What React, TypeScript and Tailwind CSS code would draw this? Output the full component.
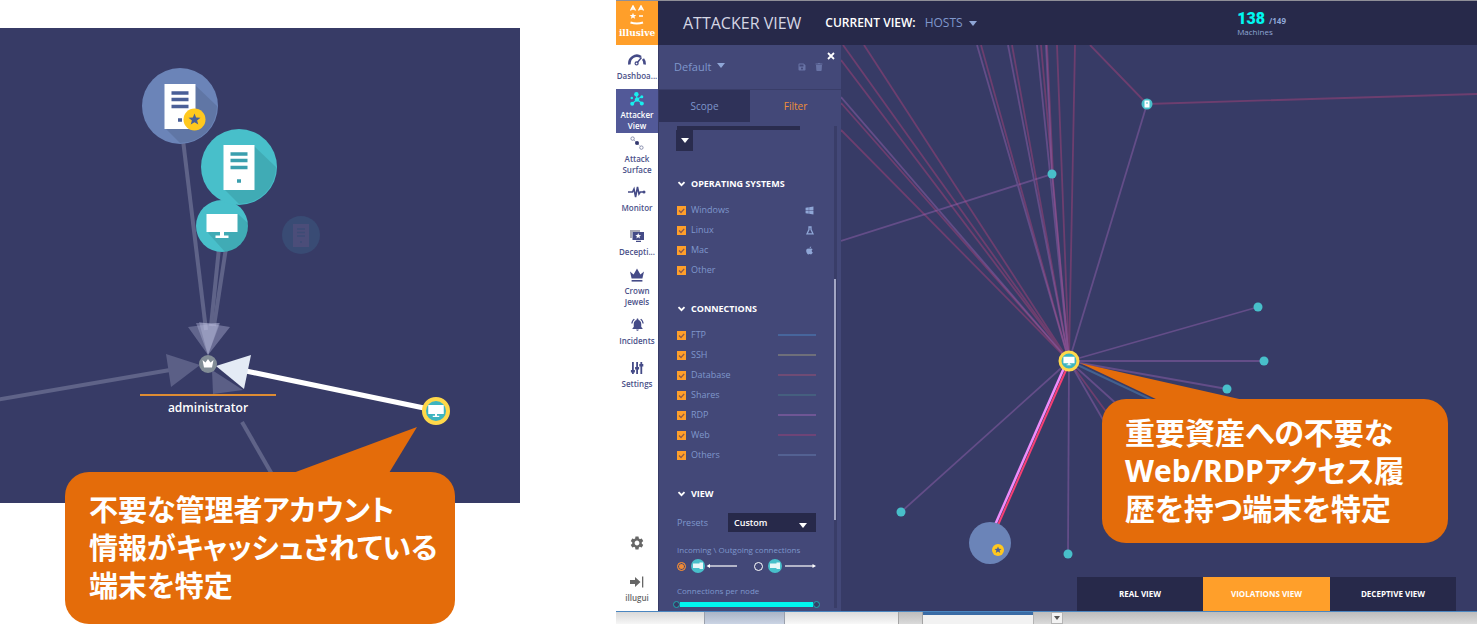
import React from "react";
import clsx from "clsx";
import { FaApple, FaSave, FaTrash, FaWindows } from "react-icons/fa";
import { MdNotificationsActive, MdSettings } from "react-icons/md";

const STAR =
  "M0 -6 L1.6 -2 L6 -1.8 L2.6 0.9 L3.8 5.1 L0 2.7 L-3.8 5.1 L-2.6 0.9 L-6 -1.8 L-1.6 -2 Z";

const HUB = [1069, 361];

// x, y of the far end of every edge that meets the hub
const redEdges = [
  [841, 60],
  [843, 45],
  [864, 45],
  [841, 103],
  [841, 130],
  [981, 45],
  [1012, 45],
  [1041, 45],
  [1057, 45],
  [1075, 45],
  [1110, 417],
];
const purpleEdges = [
  [841, 97],
  [977, 45],
  [1008, 45],
  [1037, 45],
  [1052, 174],
  [1147, 104],
  [1258, 307],
  [1264, 361],
  [1227, 389],
  [1120, 407],
  [1106, 425],
  [901, 512],
  [1068, 554],
];
const dots = [
  [1052, 174],
  [1258, 307],
  [1264, 361],
  [1227, 389],
  [901, 512],
  [1068, 554],
];

function DashboardIcon() {
  return (
    <svg viewBox="0 0 18 14" className="h-[14px] w-[18px]" fill="none" stroke="#454b87">
      <path d="M1.500 11.500 A7.500 7.500 0 0 1 13 4" strokeWidth="2.600" />
      <path d="M15 6 A7.500 7.500 0 0 1 16.500 11.500" strokeWidth="2.600" />
      <path d="M13.500 4.500 L9 10" strokeWidth="1.400" />
      <circle cx="8.600" cy="10.400" r="1.500" strokeWidth="1.200" />
    </svg>
  );
}

function AttackerIcon() {
  return (
    <svg viewBox="0 0 14 14" className="size-[14px]" fill="#18f0ee" stroke="#18f0ee">
      <path d="M7 7 L6.400 2.500 M7 7.500 L2.500 11.500 M7 7.500 L11.500 11 M7 7 L11.500 5" strokeWidth="1.200" />
      <circle cx="6.400" cy="2.300" r="2.200" stroke="none" />
      <circle cx="7" cy="7.600" r="2.200" stroke="none" />
      <circle cx="2.200" cy="11.800" r="2" stroke="none" />
      <circle cx="11.800" cy="11.400" r="2" stroke="none" />
      <circle cx="11.800" cy="4.800" r="1.500" stroke="none" />
      <circle cx="1.800" cy="6" r="1.300" stroke="none" />
    </svg>
  );
}

function SurfaceIcon() {
  return (
    <svg viewBox="0 0 14 14" className="size-[14px]" fill="none" stroke="#8a8fae">
      <circle cx="2.600" cy="2.600" r="1.700" />
      <circle cx="11.400" cy="11.600" r="1.700" />
      <path d="M4 4 L10.200 10.200" strokeDasharray="1 1" />
      <circle cx="7" cy="7" r="2" fill="#33386f" stroke="none" />
    </svg>
  );
}

function MonitorIcon() {
  return (
    <svg viewBox="0 0 18 14" className="h-[14px] w-[18px]" fill="none" stroke="#454b87">
      <path d="M0 7 H4.500 L6 4 L7.600 12 L9.500 2 L11 9 L12.300 7 H16" strokeWidth="1.600" />
      <circle cx="16" cy="7" r="1.500" fill="#454b87" stroke="none" />
    </svg>
  );
}

function DeceptionIcon() {
  return (
    <svg viewBox="0 0 16 14" className="h-[14px] w-4">
      <path d="M1 1 H11 V3 H3 V9 H1 Z" fill="#a9a9b5" />
      <path d="M3.500 3 H15 V11 H3.500 Z M7 11.800 H12 V13 H7 Z" fill="#454b87" />
      <path d={STAR} transform="translate(9.200 7) scale(.48)" fill="#fff" />
    </svg>
  );
}

function CrownIcon() {
  return (
    <svg viewBox="0 0 16 14" className="h-[14px] w-4" fill="#454b87">
      <path d="M1 3.500 L4.600 6.500 L8 0.500 L11.400 6.500 L15 3.500 L13.400 10.500 H2.600 Z" />
      <path d="M2.600 12 H13.400 V13.600 H2.600 Z" />
    </svg>
  );
}

function SettingsIcon() {
  return (
    <svg viewBox="0 0 14 14" className="size-[14px]" fill="#454b87">
      <path d="M2 1 H3.800 V13 H2 Z M6.200 1 H8 V13 H6.200 Z M10.400 1 H12.200 V13 H10.400 Z" />
      <path d="M.9 9 H4.900 V11.500 H.9 Z M5.100 6 H9.100 V8.500 H5.100 Z M9.300 3 H13.300 V5.500 H9.300 Z" />
    </svg>
  );
}

function LinuxIcon() {
  return (
    <svg viewBox="0 0 8 9" className="h-[9px] w-2" fill="none" stroke="#8fa6d6">
      <path d="M3 1 H5 V3.600 L7 7.800 H1 L3 3.600 Z" strokeWidth="1.300" />
    </svg>
  );
}

const navItems = [
  { label: "Dashboa...", icon: <DashboardIcon /> },
  { label: "Attacker View", icon: <AttackerIcon />, active: true },
  { label: "Attack Surface", icon: <SurfaceIcon /> },
  { label: "Monitor", icon: <MonitorIcon /> },
  { label: "Decepti...", icon: <DeceptionIcon /> },
  { label: "Crown Jewels", icon: <CrownIcon /> },
  { label: "Incidents", icon: <MdNotificationsActive className="size-[15px] text-[#454b87]" /> },
  { label: "Settings", icon: <SettingsIcon /> },
];

const systems = [
  { label: "Windows", icon: <FaWindows className="size-[9px]" /> },
  { label: "Linux", icon: <LinuxIcon /> },
  { label: "Mac", icon: <FaApple className="size-[9px]" /> },
  { label: "Other", icon: null },
];

const connections = [
  { label: "FTP", color: "bg-[#47659c]" },
  { label: "SSH", color: "bg-[#6e6f7a]" },
  { label: "Database", color: "bg-[#6f4b75]" },
  { label: "Shares", color: "bg-[#455f7f]" },
  { label: "RDP", color: "bg-[#6f5695]" },
  { label: "Web", color: "bg-[#6e4477]" },
  { label: "Others", color: "bg-[#536192]" },
];

function Server({ x, y }: { x: number; y: number }) {
  return (
    <g transform={`translate(${x} ${y})`}>
      <path d="M-15 22 L0 37 A37 37 0 0 0 37 0 L15 -21 Z" fill="#000" opacity=".1" />
      <rect x="-15.500" y="-22" width="31" height="45" fill="#fff" />
      <path
        d="M-8.500 -13 H8.500 M-8.500 -6.500 H8.500 M-8.500 .5 H8.500 M-2 14 H2"
        stroke="currentColor"
        strokeWidth="3.500"
      />
    </g>
  );
}

function Screen({ x, y, scale }: { x: number; y: number; scale: number }) {
  return (
    <path
      d="M-15.500 -12 H15.500 V6 H2 V9.500 H6.500 V12 H-6.500 V9.500 H-2 V6 H-15.500 Z"
      transform={`translate(${x} ${y}) scale(${scale})`}
      fill="#fff"
    />
  );
}

function AccountGraph() {
  return (
    <svg className="block h-full w-full" role="img" aria-label="administrator account graph">
      <g transform="translate(0 -28)">
        <g stroke="#5f6388" strokeWidth="4" fill="none">
          <path d="M183 140 L206 330" />
          <path d="M219 248 L211 326" />
          <path d="M226 248 L214 326" />
          <path d="M-4 400 L170 370" />
          <path d="M242 422 L273 476" />
        </g>
        <g fill="#c3c6e6" opacity=".9">
          <path d="M188 327 L219 323 L208 355 Z" opacity=".35" />
          <path d="M196 323 L220 323 L208 355 Z" opacity=".4" />
          <path d="M199 322 L230 327 L208 355 Z" opacity=".4" />
        </g>
        <path d="M166 354 L171 387 L200 365 Z" fill="#5b5f86" />
        <path d="M212 370 L213 394 L243 390 Z" fill="#5b5f86" />
        <path d="M246 371 L424 408" stroke="#fff" strokeWidth="5" />
        <path d="M216 366 L251 355 L244 389 Z" fill="#e4ebf5" />
        <circle cx="208" cy="364" r="9" fill="#828d96" />
        <path d="M202.500 360 L205.500 362.500 L208 359 L210.500 362.500 L213.500 360 L212 367.500 H204 Z" fill="#fff" />

        <circle cx="180" cy="106" r="38" fill="#6b84b8" />
        <g color="#4a5f98">
          <Server x={180} y={106} />
        </g>
        <circle cx="194.500" cy="119.500" r="11" fill="#ffc81e" />
        <path d={STAR} transform="translate(194.500 119.500)" fill="#4a5f98" />

        <circle cx="222" cy="226" r="26" fill="#48bfca" />
        <circle cx="239" cy="167" r="38" fill="#48bfca" />
        <g color="#3a9fae">
          <Server x={239} y={167} />
        </g>
        <path d="M208 233 L225 252 A26 26 0 0 0 248 223 L238 214 Z" fill="#000" opacity=".1" />
        <Screen x={222} y={226} scale={1} />

        <circle cx="301" cy="235" r="19" fill="#394b74" />
        <rect x="293" y="224" width="16" height="23" fill="#4b4d79" />
        <path d="M297 229 H305 M297 232.500 H305 M297 236 H305 M300 242 H302" stroke="#3d4b75" strokeWidth="1.500" />

        <path d="M140 395 H276" stroke="#dd8c33" strokeWidth="2" />
        <text x="208" y="412" textAnchor="middle" className="fill-white text-[12px] font-semibold">
          administrator
        </text>

        <circle cx="436" cy="411" r="12" fill="#3db4c0" stroke="#ffd84a" strokeWidth="4" />
        <Screen x={436} y={411} scale={0.5} />
        <path d="M293 473 L417 427 L389 473 Z" fill="#e46c0a" />
      </g>
    </svg>
  );
}

function HostGraph() {
  return (
    <svg className="absolute inset-0 h-full w-full" role="img" aria-label="Host connections">
      <g transform="translate(-841 -45)">
        <g stroke="#b0427a" strokeWidth="1.800" opacity=".45">
          {redEdges.map(([x, y]) => (
            <line key={`${x}-${y}`} x1={x} y1={y} x2={HUB[0]} y2={HUB[1]} />
          ))}
          <path d="M1047 45 L1053 174 M1090 45 L1147 104 L1477 94" fill="none" />
        </g>
        <g stroke="#a066b8" strokeWidth="1.800" opacity=".42">
          {purpleEdges.map(([x, y]) => (
            <line key={`${x}-${y}`} x1={x} y1={y} x2={HUB[0]} y2={HUB[1]} />
          ))}
          <path d="M1046 45 L1052 174 L841 241" fill="none" />
        </g>
        <path d="M1069 361 L1152 400" stroke="#43618f" strokeWidth="2" />
        <path d="M1067 361 L995 525" stroke="#ef8cfb" strokeWidth="2.500" />
        <path d="M1070 361 L998 525" stroke="#f73f74" strokeWidth="2" />

        {dots.map(([x, y]) => (
          <circle key={`${x}-${y}`} cx={x} cy={y} r="4.500" fill="#48bfca" />
        ))}
        <circle cx="1147" cy="104" r="5.500" fill="#48bfca" />
        <path d="M1144.500 100.500 H1149.500 V107.500 H1144.500 Z" fill="#fff" />
        <path d="M1146 103 H1148" stroke="#48bfca" />

        <circle cx="990" cy="543" r="21" fill="#6b84b8" />
        <circle cx="998" cy="550" r="6" fill="#ffc81e" />
        <path d={STAR} transform="translate(998 550) scale(.6)" fill="#4a5f98" />

        <circle cx="1069" cy="361" r="9" fill="#3db4c0" stroke="#ffd84a" strokeWidth="3" />
        <Screen x={1069} y={361} scale={0.36} />
        <path d="M1080 363 L1160 401 L1248 401 Z" fill="#e46c0a" />
      </g>
    </svg>
  );
}

function CheckRow({ label, children }: { label: string; children?: React.ReactNode }) {
  return (
    <li className="flex h-5 items-center justify-between">
      <label className="flex items-center gap-[5px]">
        <span className="grid size-[9px]">
          <input
            type="checkbox"
            defaultChecked
            className="col-start-1 row-start-1 size-[9px] appearance-none bg-[#ff9f2a]"
          />
          <svg viewBox="0 0 9 9" className="pointer-events-none col-start-1 row-start-1 size-[9px]">
            <path d="M2 4.500 L4 6.500 L7.200 2.800" fill="none" stroke="#8a5a4c" strokeWidth="1.200" />
          </svg>
        </span>
        {label}
      </label>
      {children}
    </li>
  );
}

function SectionTitle({ children }: { children: React.ReactNode }) {
  return (
    <h2>
      <button className="flex h-4 items-center gap-[5px] text-[9px] font-bold text-white">
        <svg viewBox="0 0 9 6" className="h-[6px] w-[9px]">
          <path d="M1.500 1.200 L4.500 4.200 L7.500 1.200" fill="none" stroke="#fff" strokeWidth="1.800" />
        </svg>
        {children}
      </button>
    </h2>
  );
}

function Direction({ label, outgoing }: { label: string; outgoing?: boolean }) {
  return (
    <label className="flex items-center gap-1">
      <input
        type="radio"
        name="direction"
        aria-label={label}
        defaultChecked={!outgoing}
        className="size-[9px] appearance-none rounded-full border border-white checked:border-[#f08a35] checked:bg-[#f08a35] checked:shadow-[inset_0_0_0_1px_#434878]"
      />
      <svg viewBox="0 0 49 14" className="h-[14px] w-[49px]">
        <circle cx="8" cy="7" r="7" fill="#48bfca" />
        <path d="M3 4.500 H9.500 V3.500 H13 V10 H9.500 V9 H3 Z" fill="#e8f7f8" />
        <path d="M18 7 H47" stroke="#fff" strokeWidth="1.200" />
        <path d={outgoing ? "M49 7 L45.500 5 V9 Z" : "M16.500 7 L20 5 V9 Z"} fill="#fff" />
      </svg>
    </label>
  );
}

function RangeSlider() {
  return (
    <div className="relative -mx-1 mt-1 flex h-[7px] items-center">
      <span className="size-[7px] rounded-full border border-[#1fa9ad] bg-[#373b66]" />
      <span className="h-[5px] flex-1 bg-[#00f6f0]" />
      <span className="size-[7px] rounded-full border border-[#1fa9ad] bg-[#373b66]" />
      <input
        type="range"
        aria-label="Connections per node"
        defaultValue={100}
        className="absolute inset-0 h-full w-full opacity-0"
      />
    </div>
  );
}

function FilterPanel() {
  return (
    <aside className="flex w-[183px] shrink-0 flex-col border-l border-[#373b66] bg-[#434878] text-[9px] text-[#7f97cc]">
      <div className="flex h-11 items-center pl-[15px]">
        <button className="flex items-center gap-[6px] text-[11px]">
          Default
          <svg viewBox="0 0 8 5" className="mb-1 h-[5px] w-2">
            <path d="M0 0 H8 L4 5 Z" fill="#8fa6d6" />
          </svg>
        </button>
        <button aria-label="Save" className="ml-auto text-[#6873a5]">
          <FaSave className="size-2" />
        </button>
        <button aria-label="Delete" className="ml-[9px] text-[#6873a5]">
          <FaTrash className="size-2" />
        </button>
        <button aria-label="Close" className="mr-[6px] ml-1 self-start pt-[7px]">
          <svg viewBox="0 0 8 8" className="size-2">
            <path d="M1 1 L7 7 M7 1 L1 7" stroke="#fff" strokeWidth="1.800" />
          </svg>
        </button>
      </div>
      <div role="tablist" className="flex h-[33px] border-t border-[#393d68] text-[10px]">
        <button role="tab" aria-selected="false" className="flex-1 bg-[#2f3259]">
          Scope
        </button>
        <button role="tab" aria-selected="true" className="flex-1 text-[#f08f38]">
          Filter
        </button>
      </div>
      <div className="flex flex-1 pt-1 pl-[17px]">
        <div className="w-[140px]">
          <div className="ml-px h-1 w-[123px] bg-[#2a2c4e]" />
          <button aria-label="Expand scope" className="grid h-[21px] w-[17px] place-items-center bg-[#2a2c4e]">
            <svg viewBox="0 0 8 5" className="h-[5px] w-2">
              <path d="M0 0 H8 L4 5 Z" fill="#fff" />
            </svg>
          </button>

          <div className="mt-[25px] ml-px">
            <SectionTitle>OPERATING SYSTEMS</SectionTitle>
            <ul className="mt-2">
              {systems.map((s) => (
                <CheckRow key={s.label} label={s.label}>
                  <span className="mr-[2px] text-[#8fa6d6]">{s.icon}</span>
                </CheckRow>
              ))}
            </ul>
          </div>

          <div className="mt-[21px] ml-px">
            <SectionTitle>CONNECTIONS</SectionTitle>
            <ul className="mt-2">
              {connections.map((c) => (
                <CheckRow key={c.label} label={c.label}>
                  <span className={clsx("h-[2px] w-[38px]", c.color)} />
                </CheckRow>
              ))}
            </ul>
          </div>

          <div className="mt-[21px] ml-px">
            <SectionTitle>VIEW</SectionTitle>
            <div className="mt-[11px] flex items-center justify-between">
              <label htmlFor="presets">Presets</label>
              <div className="relative">
                <select
                  id="presets"
                  className="block h-[19px] w-[88px] appearance-none bg-[#27294a] pl-[6px] text-[9px] font-semibold text-white"
                >
                  <option>Custom</option>
                </select>
                <svg viewBox="0 0 8 5" className="pointer-events-none absolute right-[9px] bottom-1 h-[5px] w-2">
                  <path d="M0 0 H8 L4 5 Z" fill="#fff" />
                </svg>
              </div>
            </div>
            <p className="mt-3 leading-3 whitespace-nowrap text-[8px]">Incoming \ Outgoing connections</p>
            <div className="mt-[3px] flex justify-between">
              <Direction label="Incoming" />
              <Direction label="Outgoing" outgoing />
            </div>
            <p className="mt-3 leading-3 text-[8px]">Connections per node</p>
            <RangeSlider />
          </div>
        </div>
        <div className="mr-1 mb-[3px] ml-auto flex w-[3px] flex-col bg-[#393d68]">
          <div className="mt-[153px] h-[241px] w-[2px] bg-[#a3a6c4]" />
        </div>
      </div>
    </aside>
  );
}

function Sidebar() {
  return (
    <nav className="flex w-[42px] shrink-0 flex-col bg-white text-center text-[8px] leading-[11px] font-semibold text-[#4b5189]">
      <a href="#home" aria-label="illusive home" className="flex h-11 flex-col items-center justify-between bg-[#ff9f2a] pt-1 pb-[6px] text-white">
        <svg viewBox="0 0 16 20" className="h-5 w-4" fill="none" stroke="#fff">
          <path d="M1.500 5.500 L4 .8 L6.500 5.500 M2.500 4 H5.500 M9.500 5.500 L12 .8 L14.500 5.500 M10.500 4 H13.500" strokeWidth="1.300" />
          <path d="M10 11 H14" strokeWidth="1.500" />
          <path d="M1.500 17.500 Q8 19.500 14 17.500" strokeWidth="2" />
          <path d={STAR} transform="translate(4 11) scale(.55)" fill="#fff" stroke="none" />
        </svg>
        <span className="font-['DejaVu_Serif','Liberation_Serif',serif] text-[9px] leading-[11px] font-bold">illusive</span>
      </a>
      {navItems.map((item) => (
        <a
          key={item.label}
          href="#view"
          className={clsx(
            "flex h-11 flex-col items-center justify-center gap-[3px]",
            item.active && "bg-[#525998] text-white"
          )}
        >
          {item.icon}
          <span>{item.label}</span>
        </a>
      ))}
      <div className="mt-auto flex flex-col items-center pb-2 text-[#666]">
        <button aria-label="Preferences">
          <MdSettings className="size-4" />
        </button>
        <a href="#logout" className="mt-[25px] flex flex-col items-center gap-1">
          <svg viewBox="0 0 14 12" className="h-3 w-[14px]" fill="#666">
            <path d="M0 4 H5 V1 L10.500 6 L5 11 V8 H0 Z M12 .5 H13.300 V11.500 H12 Z" />
          </svg>
          illugui
        </a>
      </div>
    </nav>
  );
}

function Callout({ className, lines }: { className: string; lines: string[] }) {
  return (
    <p
      className={clsx(
        "absolute rounded-[24px] bg-[#e46c0a] leading-[38px] font-bold whitespace-nowrap text-white [font-feature-settings:'palt']",
        className
      )}
    >
      {lines.map((line) => (
        <span key={line} className="block">
          {line}
        </span>
      ))}
    </p>
  );
}

export default function App() {
  return (
    <main className="flex min-h-screen items-stretch gap-24 overflow-hidden bg-white font-['Open_Sans','Noto_Sans_CJK_JP',sans-serif]">
      <section className="relative mt-7 h-[475px] w-[520px] shrink-0 self-start bg-[#373b66]">
        <AccountGraph />
        <Callout
          className="top-[444px] left-[65px] w-[390px] py-[19px] pl-6 text-[29px]"
          lines={["不要な管理者アカウント", "情報がキャッシュされている", "端末を特定"]}
        />
      </section>

      <section className="flex min-w-0 flex-1 flex-col">
        <div className="flex flex-1 border-t border-[#8f8f98]">
          <Sidebar />
          <div className="flex min-w-0 flex-1 flex-col">
            <header className="flex h-11 items-center bg-[#27294a] pl-[25px]">
              <h1 className="text-base text-[#d5d6e4]">ATTACKER VIEW</h1>
              <span className="ml-6 text-[12px] font-semibold text-white">CURRENT VIEW:</span>
              <button className="ml-[9px] flex items-center gap-[6px] text-[12px] text-[#7f97cc]">
                HOSTS
                <svg viewBox="0 0 8 5" className="h-[5px] w-2">
                  <path d="M0 0 H8 L4 5 Z" fill="#8fa6d6" />
                </svg>
              </button>
              <div className="mr-[191px] ml-auto text-[8px] leading-[9px] text-[#8fa6d6]">
                <p className="flex items-baseline gap-1 font-bold">
                  <span className="font-['Roboto',sans-serif] text-base leading-4 font-black text-[#00f6f0]">138</span>
                  <span>/149</span>
                </p>
                <p>Machines</p>
              </div>
            </header>
            <div className="flex min-h-0 flex-1">
              <FilterPanel />
              <div className="relative min-w-0 flex-1 overflow-hidden bg-[#373b66]">
                <HostGraph />
                <Callout
                  className="top-[354px] left-[261px] w-[346px] py-[15px] pl-[23px] text-[30px]"
                  lines={["重要資産への不要な", "Web/RDPアクセス履", "歴を持つ端末を特定"]}
                />
                <div className="absolute right-[21px] bottom-0 flex h-[34px] text-[8px] font-bold text-white">
                  <button className="w-[126px] bg-[#27294a]">REAL VIEW</button>
                  <button className="w-[127px] bg-[#ff9f2a]">VIOLATIONS VIEW</button>
                  <button className="w-[126px] bg-[#27294a]">DECEPTIVE VIEW</button>
                </div>
              </div>
            </div>
          </div>
        </div>
        <div className="flex h-[13px] border-t border-[#4a86c0] bg-[#d6d6d6]">
          <div className="w-[88px] bg-linear-to-b from-[#d9d9d9] to-[#f6f6f6]" />
          <div className="w-[81px] border-x border-[#9aa0ac] bg-linear-to-b from-[#aab4c6] to-[#cbd4e4]" />
          <div className="w-[113px] bg-linear-to-b from-[#dcdcdc] to-[#f8f8f8]" />
          <div className="w-[25px] border-x border-[#a4a4a4] bg-linear-to-b from-[#bcbcbc] to-[#dadada]" />
          <div className="w-[110px] border-t-[3px] border-[#3a6ba5] bg-[#f2f2f2]" />
          <div className="w-[18px] border-l border-[#b4b4b4] bg-linear-to-b from-[#bcbcbc] to-[#dadada]" />
          <button aria-label="Scroll down" className="grid w-3 place-items-center border border-[#b4b4b4] bg-[#f2f2f2]">
            <svg viewBox="0 0 6 4" className="h-1 w-[6px]">
              <path d="M0 0 H6 L3 4 Z" fill="#555" />
            </svg>
          </button>
          <div className="flex-1 bg-linear-to-b from-[#bcbcbc] to-[#dadada]" />
        </div>
      </section>
    </main>
  );
}
